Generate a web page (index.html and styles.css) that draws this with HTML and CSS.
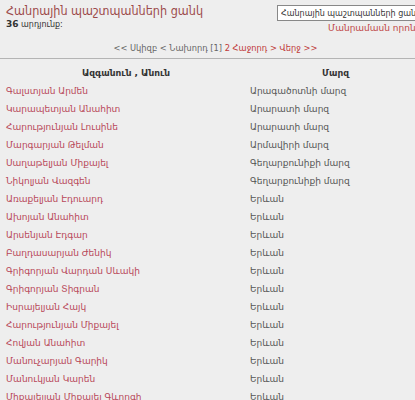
FILE: index.html
```html
<!DOCTYPE html>
<html lang="hy">
<head>
<meta charset="utf-8">
<title>Հանրային պաշտպանների ցանկ</title>
<link rel="stylesheet" href="styles.css">
</head>
<body>
<div class="page">
  <div class="top">
    <div class="heading">
      <h1 class="title">Հանրային պաշտպանների ցանկ</h1>
      <div class="count"><b>36</b> արդյունք:</div>
    </div>
    <div class="search">
      <input class="search-input" type="text" value="Հանրային պաշտպանների ցանկ">
      <a class="adv" href="#">Մանրամասն որոնում</a>
    </div>
  </div>
  <div class="pager">&lt;&lt; Սկիզբ &lt; Նախորդ [1] <a href="#">2</a> <a href="#">Հաջորդ &gt;</a> <a href="#">Վերջ &gt;&gt;</a></div>
  <table class="list">
    <thead>
      <tr><th class="c-name">Ազգանուն , Անուն</th><th class="c-reg">Մարզ</th></tr>
    </thead>
    <tbody>
      <tr><td><a href="#">Գալստյան Արմեն</a></td><td>Արագածոտնի մարզ</td></tr>
      <tr><td><a href="#">Կարապետյան Անահիտ</a></td><td>Արարատի մարզ</td></tr>
      <tr><td><a href="#">Հարությունյան Լուսինե</a></td><td>Արարատի մարզ</td></tr>
      <tr><td><a href="#">Մարգարյան Թելման</a></td><td>Արմավիրի մարզ</td></tr>
      <tr><td><a href="#">Սաղաթելյան Միքայել</a></td><td>Գեղարքունիքի մարզ</td></tr>
      <tr><td><a href="#">Նիկոլյան Վազգեն</a></td><td>Գեղարքունիքի մարզ</td></tr>
      <tr><td><a href="#">Առաքելյան Էդուարդ</a></td><td>Երևան</td></tr>
      <tr><td><a href="#">Ախոյան Անահիտ</a></td><td>Երևան</td></tr>
      <tr><td><a href="#">Արսենյան Էդգար</a></td><td>Երևան</td></tr>
      <tr><td><a href="#">Բաղդասարյան Ժենիկ</a></td><td>Երևան</td></tr>
      <tr><td><a href="#">Գրիգորյան Վարդան Սևակի</a></td><td>Երևան</td></tr>
      <tr><td><a href="#">Գրիգորյան Տիգրան</a></td><td>Երևան</td></tr>
      <tr><td><a href="#">Իսրայելյան Հայկ</a></td><td>Երևան</td></tr>
      <tr><td><a href="#">Հարությունյան Միքայել</a></td><td>Երևան</td></tr>
      <tr><td><a href="#">Հովյան Անահիտ</a></td><td>Երևան</td></tr>
      <tr><td><a href="#">Մանուչարյան Գարիկ</a></td><td>Երևան</td></tr>
      <tr><td><a href="#">Մանուկյան Կարեն</a></td><td>Երևան</td></tr>
      <tr><td><a href="#">Միքայելյան Միքայել Գևորգի</a></td><td>Երևան</td></tr>
    </tbody>
  </table>
</div>
</body>
</html>
```
FILE: styles.css
```css
html, body {
  margin: 0;
  padding: 0;
  background: #eeeeee;
  overflow-x: hidden;
}
body {
  font-family: "DejaVu Sans", sans-serif;
  color: #555555;
  font-size: 10px;
}
.page {
  width: 431px;
  padding-top: 2px;
}
.top {
  display: flex;
  justify-content: space-between;
  align-items: flex-start;
  padding-left: 6px;
}
.title {
  margin: 0;
  font-family: "DejaVu Sans Condensed", "DejaVu Sans", sans-serif;
  font-size: 12.5px;
  font-weight: normal;
  color: #9c4a4a;
  line-height: 17px;
  white-space: nowrap;
}
.count {
  font-size: 8px;
  color: #333;
  line-height: 10px;
}
.count b {
  font-size: 9px;
}
.search {
  display: flex;
  flex-direction: column;
  align-items: flex-end;
  padding-top: 3px;
  width: 154px;
}
.search-input {
  box-sizing: border-box;
  width: 154px;
  height: 16px;
  border: 1px solid #888;
  background: #fff;
  font-family: inherit;
  font-size: 8px;
  padding: 0 3px;
  margin: 0;
  color: #333;
}
.adv {
  margin-top: 2px;
  font-size: 9px;
  color: #c04848;
  white-space: nowrap;
}
a { color: #b8485a; text-decoration: none; }
.pager {
  text-align: center;
  margin-top: 9px;
  padding-bottom: 4px;
  font-size: 8.3px;
  line-height: 12px;
  color: #666;
  border-bottom: 1px solid #b4b4b4;
}
.pager a { color: #c03a3a; }
.list {
  border-collapse: collapse;
  width: 419px;
  margin: 4px 0 0 6px;
}
.list th {
  font-weight: bold;
  font-size: 9px;
  color: #333;
  text-align: center;
  height: 19px;
  padding: 0;
}
.c-name { width: 240px; }
.list td {
  font-size: 9px;
  height: 18px;
  padding: 0;
  white-space: nowrap;
}
.list td + td { padding-left: 4px; }
```
